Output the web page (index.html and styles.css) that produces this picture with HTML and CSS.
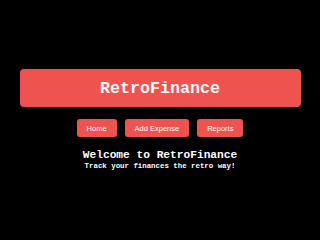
FILE: index.html
```html
<!DOCTYPE html>
<html>
<head>
<meta charset="utf-8">
<link rel="stylesheet" href="styles.css">
</head>
<body>
<div class="page">
  <header class="banner"><h1 class="title">RetroFinance</h1></header>
  <nav class="nav">
    <button class="btn">Home</button>
    <button class="btn">Add Expense</button>
    <button class="btn">Reports</button>
  </nav>
  <section class="welcome">
    <h2 class="welcome-title">Welcome to RetroFinance</h2>
    <p class="welcome-sub">Track your finances the retro way!</p>
  </section>
</div>
</body>
</html>
```
FILE: styles.css
```css
html, body {
  margin: 0;
  padding: 0;
  background: #000;
}
.page {
  min-height: 240px;
  display: flex;
  flex-direction: column;
  align-items: center;
  justify-content: center;
  font-family: "Courier New", Courier, "Nimbus Mono PS", "Liberation Mono", monospace;
  color: #fff;
}
.banner {
  box-sizing: border-box;
  width: 281px;
  height: 38px;
  background: #ef5350;
  border-radius: 4px;
  display: flex;
  align-items: center;
  justify-content: center;
}
.title {
  margin: 0;
  font-size: 16.7px;
  font-weight: bold;
  color: #fff;
}
.nav {
  display: flex;
  gap: 8px;
  margin-top: 12px;
}
.btn {
  height: 18px;
  padding: 0 10px;
  border: none;
  border-radius: 3px;
  background: #ef5350;
  color: #fff;
  font-family: "Liberation Sans", Arial, sans-serif;
  font-size: 7.5px;
}
.welcome {
  margin-top: 12px;
  text-align: center;
}
.welcome-title {
  margin: 0;
  font-size: 11.2px;
  line-height: 13px;
  font-weight: bold;
}
.welcome-sub {
  margin: 0;
  font-size: 7.4px;
  line-height: 9px;
  font-weight: bold;
}
```
